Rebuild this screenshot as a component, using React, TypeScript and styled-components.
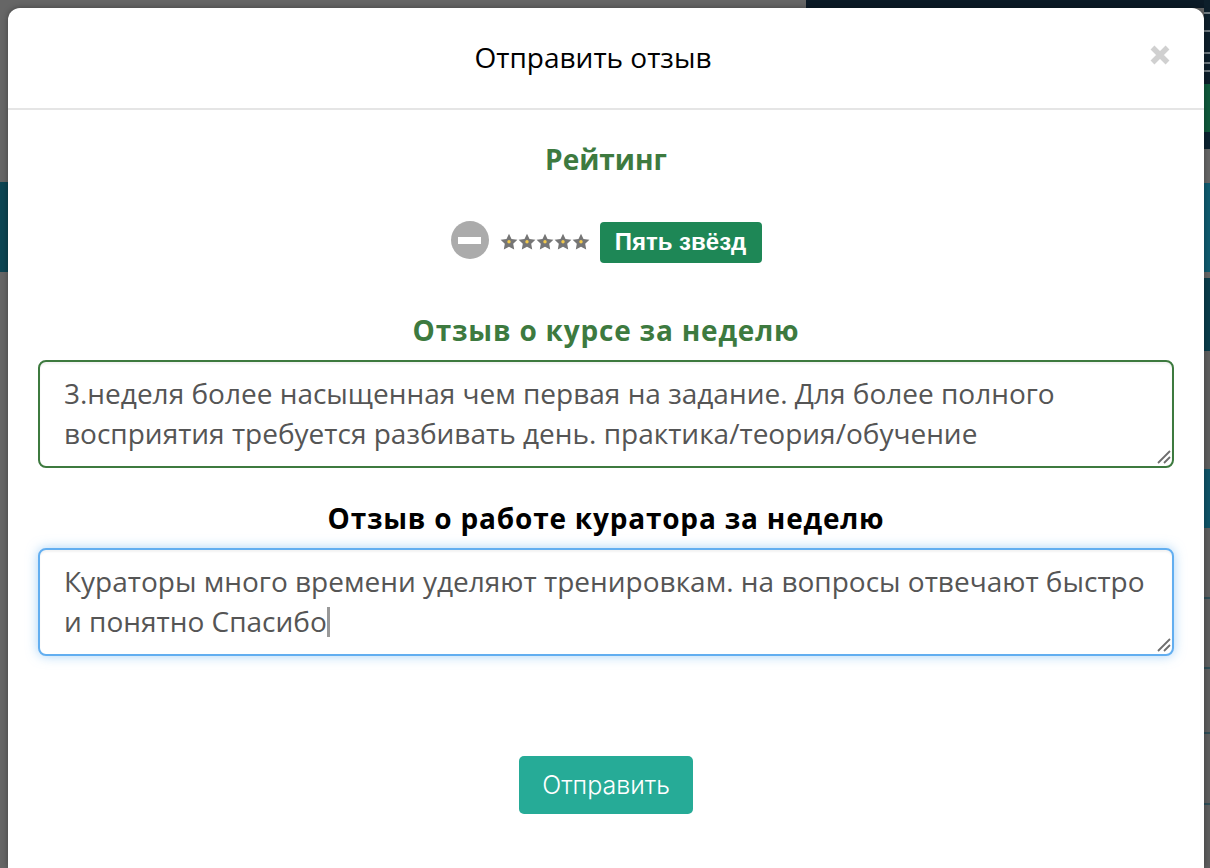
import styled, {createGlobalStyle} from 'styled-components'

const GlobalStyle = createGlobalStyle`
  html, body {
    margin: 0;
    height: 868px;
    overflow: hidden;
    background: #666;
  }
  * {
    box-sizing: border-box;
  }
`

const streak = '#6f7a80'
const railSegments = [
  {height: 12, color: '#0d1f2b'},
  {height: 2, color: streak},
  {height: 16, color: '#0d1f2b'},
  {height: 2, color: streak},
  {height: 20, color: '#0d1f2b'},
  {height: 2, color: streak},
  {height: 8, color: '#0d1f2b'},
  {height: 2, color: streak},
  {height: 6, color: '#0d1f2b'},
  {height: 2, color: streak},
  {height: 12, color: '#0d1f2b'},
  {height: 48, color: '#0f5a3c'},
  {height: 17, color: '#0b2230'},
  {height: 34, color: '#666'},
  {height: 89, color: '#0f5c70'},
  {height: 6, color: '#666'},
  {height: 73, color: '#0a3d4b'},
  {height: 118, color: '#5f5f5f'},
  {height: 59, color: '#0f5468'},
  {height: 69, color: '#5f5f5f'},
  {height: 2, color: '#2f4f58'},
  {height: 68, color: '#5f5f5f'},
  {height: 2, color: '#2f4f58'},
  {height: 63, color: '#5f5f5f'},
  {height: 2, color: '#2f4f58'},
  {height: 69, color: '#5f5f5f'},
  {height: 2, color: '#2f4f58'},
  {height: 65, color: '#5f5f5f'},
]

const Star = () => (
  <svg width="18" height="18" viewBox="0 0 18 18">
    <path
      d="M9 .8l2.5 5.2 5.9.8-4.2 4 1 5.7L9 13.8l-5.2 2.7 1-5.7-4.2-4 5.9-.8z"
      fill="#757575"
    />
    <circle cx="9" cy="8.8" r="1.7" fill="#f2c94c" />
  </svg>
)

const Grip = () => (
  <GripIcon width="14" height="14" viewBox="0 0 14 14">
    <path d="M1 13L13 1M7 13L13 7" stroke="#6e6e6e" strokeWidth="1.8" />
  </GripIcon>
)

export default function App() {
  return (
    <Page>
      <GlobalStyle />
      <Backdrop>
        <TopBanner />
        <SideStrip />
      </Backdrop>
      <Rail>
        {railSegments.map((s, i) => (
          <RailSegment key={i} $height={s.height} $color={s.color} />
        ))}
      </Rail>
      <Modal>
        <ModalHeader>
          <ModalTitle>Отправить отзыв</ModalTitle>
          <Close>
            <svg width="22" height="22" viewBox="0 0 22 22">
              <path d="M3.5 3.5l15 15M18.5 3.5l-15 15" stroke="#d0d0d0" strokeWidth="5.5" />
            </svg>
          </Close>
        </ModalHeader>
        <ModalBody>
          <RatingTitle>Рейтинг</RatingTitle>
          <RatingRow>
            <ClearButton />
            <Stars>
              {[0, 1, 2, 3, 4].map(i => (
                <Star key={i} />
              ))}
            </Stars>
            <RatingBadge>Пять звёзд</RatingBadge>
          </RatingRow>
          <FieldLabel $color="#3d7a3f" $top={49} $bottom={12}>Отзыв о курсе за неделю</FieldLabel>
          <ReviewWrap>
            <ReviewBox
              $state="valid"
              readOnly
              value={'3.неделя более насыщенная чем первая на задание. Для более полного восприятия требуется разбивать день. практика/теория/обучение'}
            />
            <Grip />
          </ReviewWrap>
          <FieldLabel $color="#000" $top={32} $bottom={12}>Отзыв о работе куратора за неделю</FieldLabel>
          <ReviewWrap>
            <ReviewBox
              $state="focus"
              readOnly
              value={'Кураторы много времени уделяют тренировкам. на вопросы отвечают быстро и понятно Спасибо'}
            />
            <Caret />
            <Grip />
          </ReviewWrap>
          <SubmitRow>
            <SubmitButton>Отправить</SubmitButton>
          </SubmitRow>
        </ModalBody>
      </Modal>
    </Page>
  )
}

const Page = styled.div`
  height: 868px;
  overflow: hidden;
  padding: 8px 6px 0 8px;
  position: relative;
`
const Backdrop = styled.div`
  inset: 0;
  position: absolute;
`
const TopBanner = styled.div`
  background: #0b1a26;
  height: 8px;
  margin-left: 806px;
`
const SideStrip = styled.div`
  background: #0d4553;
  height: 90px;
  margin-top: 174px;
`
const Rail = styled.div`
  display: flex;
  flex-direction: column;
  position: absolute;
  right: 0;
  top: 0;
  width: 6px;
`
const RailSegment = styled.div<{$height: number; $color: string}>`
  background: ${p => p.$color};
  height: ${p => p.$height}px;
`
const Modal = styled.div`
  background: #fff;
  border-radius: 12px 12px 0 0;
  box-shadow: 0 0 6px rgba(0, 0, 0, 0.35);
  height: 860px;
  position: relative;
  width: 1196px;
`
const ModalHeader = styled.header`
  align-items: center;
  border-bottom: 2px solid #e5e5e5;
  display: flex;
  height: 102px;
  justify-content: center;
  padding: 0 26px 2px 0;
  position: relative;
`
const ModalTitle = styled.h4`
  color: #000;
  font-family: 'Open Sans', sans-serif;
  font-size: 28px;
  font-weight: 400;
  margin: 0;
`
const Close = styled.span`
  display: flex;
  position: absolute;
  right: 33px;
  top: 36px;
`
const ModalBody = styled.div`
  display: flex;
  flex-direction: column;
  padding: 31px 30px 0;
`
const RatingTitle = styled.h4`
  color: #3d7a3f;
  font-family: 'Open Sans', sans-serif;
  font-size: 28px;
  font-weight: 700;
  line-height: 36px;
  margin: 0;
  text-align: center;
`
const RatingRow = styled.div`
  align-items: center;
  display: flex;
  height: 42px;
  justify-content: center;
  margin-top: 44px;
  padding-right: 1px;
`
const ClearButton = styled.span`
  align-items: center;
  background: #ababab;
  border-radius: 50%;
  display: flex;
  height: 38px;
  justify-content: center;
  margin: -4px 0 0 1px;
  width: 38px;

  &::before {
    background: #fff;
    content: '';
    height: 7px;
    width: 23px;
  }
`
const Stars = styled.span`
  display: flex;
  margin-left: 11px;
`
const RatingBadge = styled.span`
  align-items: center;
  background: #1e8756;
  border-radius: 4px;
  color: #fff;
  display: flex;
  font-family: 'Liberation Sans', sans-serif;
  font-size: 24px;
  font-weight: 700;
  height: 41px;
  justify-content: center;
  margin-left: 10px;
  width: 162px;
`
const FieldLabel = styled.h4<{$color: string; $top: number; $bottom: number}>`
  color: ${p => p.$color};
  font-family: 'Open Sans', sans-serif;
  font-size: 28px;
  font-weight: 700;
  letter-spacing: 0.8px;
  line-height: 36px;
  margin: ${p => p.$top}px 0 ${p => p.$bottom}px;
  text-align: center;
`
const ReviewWrap = styled.div`
  display: flex;
  position: relative;
`
const ReviewBox = styled.textarea<{$state: 'valid' | 'focus'}>`
  background: #fff;
  border: 2px solid ${p => (p.$state === 'valid' ? '#3d7a3f' : '#62aef0')};
  border-radius: 8px;
  box-shadow: ${p =>
    p.$state === 'focus'
      ? '0 0 12px rgba(98, 174, 240, 0.55), inset 0 2px 2px rgba(0, 0, 0, 0.05)'
      : 'inset 0 2px 2px rgba(0, 0, 0, 0.05)'};
  color: #555;
  display: block;
  font-family: 'Open Sans', sans-serif;
  font-size: 28px;
  height: 108px;
  line-height: 40px;
  outline: none;
  overflow: hidden;
  padding: 11px 24px;
  resize: none;
  width: 100%;
`
const GripIcon = styled.svg`
  bottom: 4px;
  position: absolute;
  right: 3px;
`
const Caret = styled.span`
  background: #999;
  height: 30px;
  left: 289px;
  position: absolute;
  top: 59px;
  width: 3px;
`
const SubmitRow = styled.div`
  display: flex;
  justify-content: center;
  margin-top: 100px;
`
const SubmitButton = styled.button`
  background: #26ab97;
  border: none;
  border-radius: 5px;
  color: #fff;
  font-family: Inter, sans-serif;
  font-size: 25px;
  font-weight: 300;
  height: 58px;
  width: 174px;
`
